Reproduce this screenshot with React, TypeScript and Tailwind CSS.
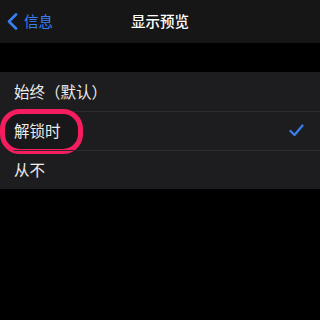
import React from 'react';

// Пункты списка
const OPTIONS = [
  { id: 'always', label: '始终（默认）' },
  { id: 'unlocked', label: '解锁时' },
  { id: 'never', label: '从不' },
];

const FONT = "font-['Noto_Sans_CJK_SC','Noto_Sans',sans-serif]";

export default function App() {
  const selected = 'unlocked';

  return (
    <div className={`w-[320px] h-[320px] bg-black overflow-hidden ${FONT}`}>
      {/* Навигация */}
      <div className="h-[43px] bg-[#161616] flex items-center relative">
        <div className="flex items-center pl-[7px] text-[#3a7ff2]">
          <svg width="11" height="17" viewBox="0 0 11 17" fill="none">
            <path d="M9 1.5L2 8.5L9 15.5" stroke="currentColor" strokeWidth="2.6" strokeLinecap="round" strokeLinejoin="round" />
          </svg>
          <span className="ml-[6px] text-[14.5px] leading-none">信息</span>
        </div>
        <div className="absolute inset-0 flex items-center justify-center pointer-events-none">
          <span className="text-white text-[14.5px] font-medium leading-none">显示预览</span>
        </div>
      </div>

      <div className="h-[29px]" />

      {/* Список */}
      <div className="bg-[#1d1d1f]">
        {OPTIONS.map((opt, i) => (
          <div key={opt.id} className="relative h-[39px] flex items-center">
            {i > 0 && <div className="absolute top-0 left-[14px] right-0 h-px bg-[#2c2c2e]" />}
            {opt.id === selected && (
              <div className="absolute left-0 top-[-2px] w-[83px] h-[45px] rounded-[20px] border-[5px] border-[#f51d60] bg-[#18181a]" />
            )}
            <span className="relative pl-[14px] text-[15.5px] text-[#ececec] leading-none">{opt.label}</span>
            {opt.id === selected && (
              <svg className="absolute right-[16px]" width="15" height="13" viewBox="0 0 15 13" fill="none">
                <path d="M1.5 7L5.5 11L13.5 1.5" stroke="#3a7ff2" strokeWidth="2.2" strokeLinecap="round" strokeLinejoin="round" />
              </svg>
            )}
          </div>
        ))}
      </div>
    </div>
  );
}
